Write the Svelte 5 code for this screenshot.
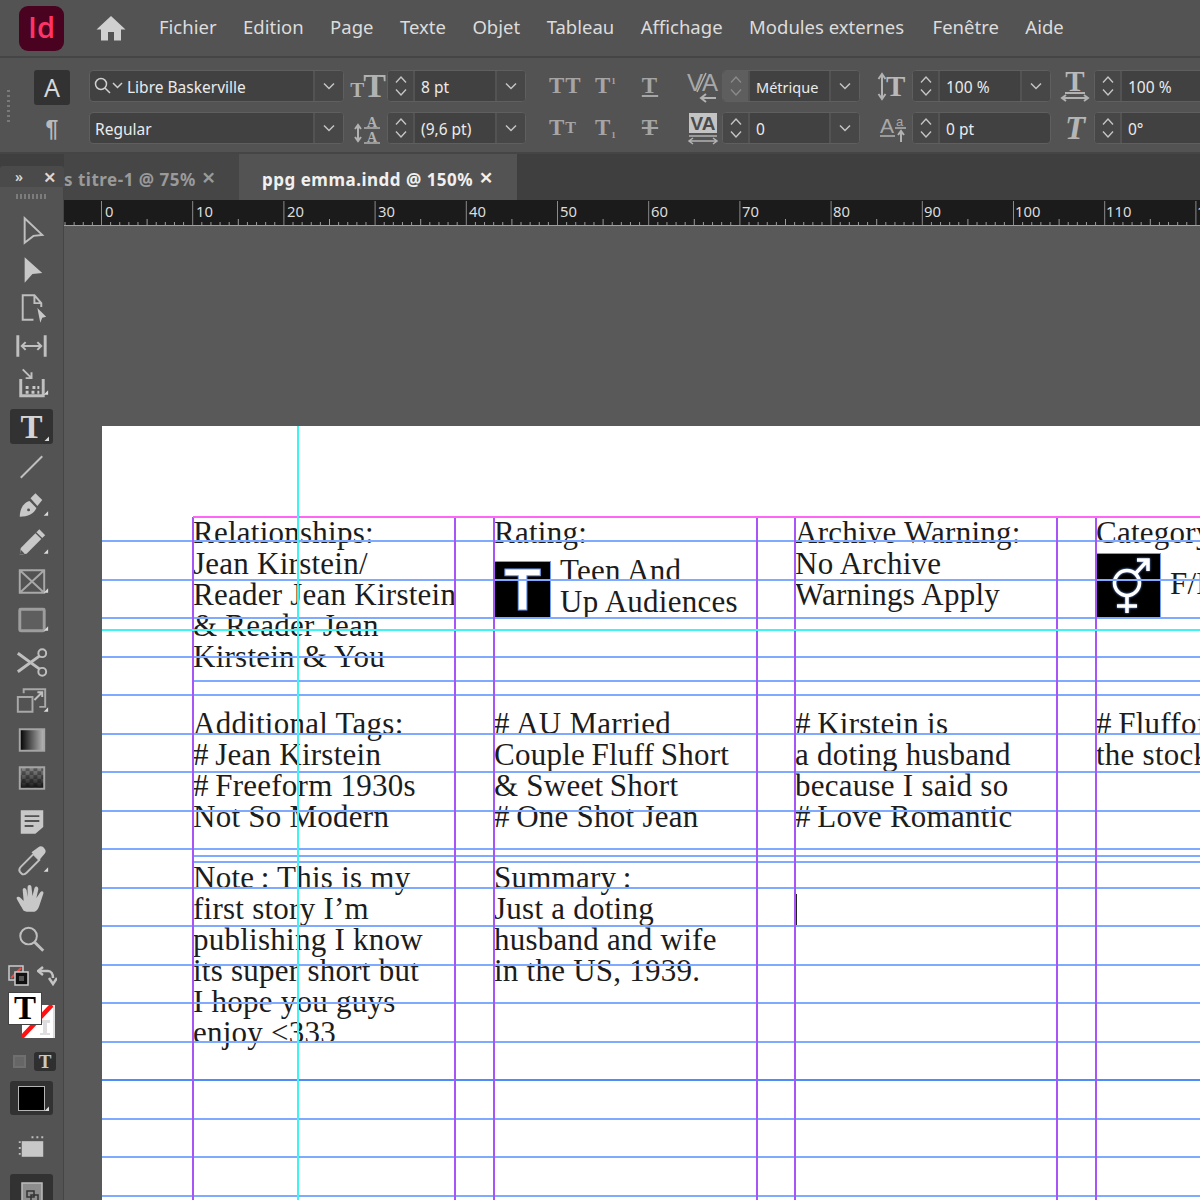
<script>
  const menus = ['Fichier','Edition','Page','Texte','Objet','Tableau','Affichage','Modules externes','Fenêtre','Aide'];
  const hGuides = [115,154,192,231,269,308,346,385,423,462,500,539,577,616,693,731,770];
  const colGuides = [255,430,436];
  const vGuides = [91,353,392,655,693,955,994];
  const ticks = [];
  for (let i = -4; i < 130; i++) ticks.push(i);
  const labels = [];
  for (let i = 0; i <= 120; i += 10) labels.push(i);
  const unit = 9.12;
</script>

{#snippet chev()}
  <svg class="chev" width="14" height="8" viewBox="0 0 14 8"><path d="M2 1.5 7 6.5 12 1.5" /></svg>
{/snippet}
{#snippet stepper(dim)}
  <div class="stepper" class:dim={dim}>
    <svg width="14" height="9" viewBox="0 0 14 9"><path d="M2 7.5 7 2 12 7.5" /></svg>
    <svg width="14" height="9" viewBox="0 0 14 9"><path d="M2 1.5 7 7 12 1.5" /></svg>
  </div>
{/snippet}
{#snippet numfield(value, dd, dim)}
  <div class="field">
    {@render stepper(dim)}
    <span class="val" class:tight={dim}>{value}</span>
    {#if dd}<span class="dd">{@render chev()}</span>{/if}
  </div>
{/snippet}
{#snippet corner()}
  <path class="corner" d="M39 30h-4.500l4.500-4.500z" />
{/snippet}

<div class="app">
  <header class="menubar">
    <div class="logo">Id</div>
    <svg class="home" width="30" height="26" viewBox="0 0 30 26"><path d="M15 1 29.500 14.500H25V25.500H18V17H12V25.500H5V14.500H.5z" /></svg>
    <nav class="menus">
      {#each menus as m}<span>{m}</span>{/each}
    </nav>
  </header>

  <section class="panel">
    <div class="grip"></div>
    <div class="col c-a">
      <div class="mode on">A</div>
      <div class="mode para">¶</div>
    </div>
    <div class="col c-font">
      <div class="field">
        <svg class="search" width="35" height="20" viewBox="0 0 35 20"><circle cx="9" cy="8" r="5.500"/><path d="M13 12 18 17M21 7l4.500 4.500L30 7"/></svg>
        <span class="val font">Libre Baskerville</span><span class="dd">{@render chev()}</span>
      </div>
      <div class="field">
        <span class="val style">Regular</span><span class="dd">{@render chev()}</span>
      </div>
    </div>
    <div class="col c-ico1">
      <div class="gl size"><small>T</small>T</div>
      <div class="gl lead"><svg width="32" height="32" viewBox="0 0 32 32"><text x="20" y="15" class="svgt">A</text><text x="20" y="30" class="svgt">A</text><path d="M6 14v14M3 17l3-4 3 4M3 25l3 4 3-4" class="s2"/><path d="M12 16H28M12 31H28" class="s1"/></svg></div>
    </div>
    <div class="col c-f1">
      {@render numfield('8 pt', true)}
      {@render numfield('(9,6 pt)', true)}
    </div>
    <div class="col c-t1"><div class="gl cap">TT</div><div class="gl cap"><span>T</span><small class="sc">T</small></div></div>
    <div class="col c-t2"><div class="gl cap">T<sup>1</sup></div><div class="gl cap">T<sub>1</sub></div></div>
    <div class="col c-t3"><div class="gl cap under">T</div><div class="gl cap strike">T</div></div>
    <div class="col c-ico2">
      <div class="gl"><svg width="32" height="32" viewBox="0 0 32 32"><text x="0" y="21" class="kern">V</text><text x="15" y="21" class="kern">A</text><path d="M10 22 19 3" class="s1"/><path d="M29 28H15M19 24l-5 4 5 4" class="s2"/></svg></div>
      <div class="gl"><svg width="32" height="32" viewBox="0 0 32 32"><rect x="2" y="1" width="28" height="20" fill="#c4c4c4"/><text x="16" y="18" text-anchor="middle" class="track">VA</text><path d="M2 24H30" class="s1"/><path d="M3 29H29M6 26l-4 3 4 3M26 26l4 3-4 3" class="s1"/></svg></div>
    </div>
    <div class="col c-f2">
      {@render numfield('Métrique', true, true)}
      {@render numfield('0', true)}
    </div>
    <div class="col c-ico3">
      <div class="gl"><svg width="32" height="32" viewBox="0 0 32 32"><text x="9" y="26" class="big">T</text><path d="M5 5V28M1.500 9 5 4l3.500 5M1.500 24 5 29l3.500-5" class="s2"/></svg></div>
      <div class="gl"><svg width="32" height="32" viewBox="0 0 32 32"><text x="3" y="21" class="mid">A</text><text x="19" y="14" class="tiny">a</text><path d="M3 24H18M18 16H29" class="s1"/><path d="M24 30V19M21 23l3-4 3 4" class="s2"/></svg></div>
    </div>
    <div class="col c-f3">
      {@render numfield('100 %', true)}
      {@render numfield('0 pt', false)}
    </div>
    <div class="col c-ico4">
      <div class="gl"><svg width="32" height="32" viewBox="0 0 32 32"><text x="16" y="21" text-anchor="middle" class="big">T</text><path d="M6 23H26" class="s2"/><path d="M3 28H29M7 25l-4 3 4 3M25 25l4 3-4 3" class="s2"/></svg></div>
      <div class="gl ital">T</div>
    </div>
    <div class="col c-f4">
      {@render numfield('100 %', false)}
      {@render numfield('0°', false)}
    </div>
  </section>

  <div class="workspace">
    <aside class="toolcol">
      <div class="tool-head"><span class="more">»</span><span class="x">×</span></div>
      <div class="tools">
        <div class="tgrip"></div>

        <div class="tool"><svg viewBox="0 0 44 38"><path d="M15 6 33 23 24 24 15 31z" class="o"/></svg></div>
        <div class="tool"><svg viewBox="0 0 44 38"><path d="M15 7 33 23 23 24 15 33z" class="f"/></svg></div>
        <div class="tool"><svg viewBox="0 0 44 38"><path d="M24 31H13V6H25L32 14V18M25 6V14H32" class="o"/><path d="M28 19 37 28 33 29 31 34z" class="f"/></svg></div>
        <div class="tool"><svg viewBox="0 0 44 38"><path d="M8 8V30M36 8V30" class="o w"/><path d="M12 19H32M16 15 12 19 16 23M28 15 32 19 28 23" class="o"/></svg></div>
        <div class="tool"><svg viewBox="0 0 44 38"><path d="M11 14V31H34V14" class="o w"/><path d="M13 4 22 13M22 7V13H16" class="o"/><path d="M16 21h3v3h-3zM23 21h3v3h-3zM16 26h3v3h-3zM22 26h3v3h-3zM28 21h2v3h-2zM28 26h2v3h-2z" class="f"/>{@render corner()}</svg></div>

        <div class="tool sel gap"><span class="tt">T</span><svg class="ov" viewBox="0 0 44 34">{@render corner()}</svg></div>

        <div class="tool"><svg viewBox="0 0 44 38"><path d="M11 30 33 8" class="o"/></svg></div>
        <div class="tool"><svg viewBox="0 0 44 38"><path d="M10 31C10 24 13 17 20 15L27 22C25 28 18 31 10 31Z" class="f"/><path d="M21 12 26 7 33 14 28 20z" class="f"/><circle cx="19" cy="24" r="1.500" fill="#535353"/>{@render corner()}</svg></div>
        <div class="tool"><svg viewBox="0 0 44 38"><path d="M10 31 11 24 26 9 32 15 17 30z" class="f"/><path d="M27 8 30 5 36 11 33 14z" class="f"/><path d="M10 31 11 26 15 30z" fill="#535353"/>{@render corner()}</svg></div>
        <div class="tool"><svg viewBox="0 0 44 38"><path d="M10 7H35V30H10zM10 7 35 30M35 7 10 30" class="o soft"/>{@render corner()}</svg></div>
        <div class="tool"><svg viewBox="0 0 44 38"><rect x="10" y="8" width="25" height="22" class="o w rectt" rx="1"/>{@render corner()}</svg></div>

        <div class="tool gap"><svg viewBox="0 0 44 38"><circle cx="33" cy="9" r="4" class="o"/><circle cx="33" cy="28" r="4" class="o"/><path d="M8 9 30 25M8 28 30 12" class="o w"/></svg></div>
        <div class="tool"><svg viewBox="0 0 44 38"><path d="M14 11V7H36V25H30" class="o soft"/><path d="M8 15H23V30H8z" class="o soft"/><path d="M25 18 33 10M28 10H33V15" class="o"/>{@render corner()}</svg></div>
        <div class="tool"><svg viewBox="0 0 44 38"><defs><linearGradient id="g"><stop offset="0" stop-color="#000"/><stop offset="1" stop-color="#bbb"/></linearGradient><pattern id="ch" width="8" height="8" patternUnits="userSpaceOnUse"><rect width="8" height="8" fill="#8b8b8b"/><rect width="4" height="4" fill="#5e5e5e"/><rect x="4" y="4" width="4" height="4" fill="#5e5e5e"/></pattern><linearGradient id="g2" x1="0" y1="1" x2="0" y2="0"><stop offset="0" stop-color="#000" stop-opacity=".85"/><stop offset="1" stop-color="#000" stop-opacity="0"/></linearGradient></defs><rect x="10" y="8" width="25" height="22" fill="url(#g)" stroke="#a5a5a5" stroke-width="2"/></svg></div>
        <div class="tool"><svg viewBox="0 0 44 38"><rect x="10" y="8" width="25" height="22" fill="url(#ch)"/><rect x="10" y="8" width="25" height="22" fill="url(#g2)" stroke="#a5a5a5" stroke-width="2"/></svg></div>

        <div class="tool gap2"><svg viewBox="0 0 44 38"><path d="M11 7H34V24L26 31H11z" class="f"/><path d="M15 13H30M15 18H30M15 23H24" stroke="#535353" stroke-width="2"/></svg></div>
        <div class="tool"><svg viewBox="0 0 44 38"><path d="M12 32 10 30C9 28 10 26 11 25L24 12 30 18 17 31C15 33 13 33 12 32Z" class="o"/><path d="M22 10 29 5C31 3 34 4 35 6 37 8 37 10 35 12L30 18z" class="f"/>{@render corner()}</svg></div>
        <div class="tool"><svg viewBox="0 0 44 38"><path d="M14 31C11 26 8 21 7 19 6 16 9 16 11 18L14 21 13 10C13 7 16 7 17 10L18 17 18 7C18 4 22 4 22 7L23 16 25 8C26 5 29 6 29 9L27 18 31 12C33 10 35 12 34 14L30 26C29 29 27 32 25 32H17Z" class="f"/></svg></div>
        <div class="tool zoomt"><svg viewBox="0 0 44 38"><circle cx="19" cy="16" r="8.500" class="o"/><path d="M25 22 34 31" class="o w"/></svg></div>

        <div class="swaprow">
          <svg width="22" height="22" viewBox="0 0 22 22"><rect x="1" y="1" width="14" height="14" fill="#555" stroke="#ccc" stroke-width="1.500"/><path d="M3 13 13 3" stroke="#f44" stroke-width="2"/><rect x="7" y="7" width="13" height="13" fill="#111" stroke="#ccc" stroke-width="1.500"/><rect x="11" y="11" width="5" height="5" fill="#555"/></svg>
          <svg width="20" height="20" viewBox="0 0 20 20"><path d="M2 5H11C14 5 16 8 16 12" class="sw"/><path d="M6 1 1 5 6 9M12 12 16 18 20 12" class="sw"/></svg>
        </div>

        <div class="swatches">
          <div class="stroke"><svg width="33" height="33" viewBox="0 0 33 33"><rect width="31" height="33" fill="#fff"/><path d="M18 15h10v3h-3v10h3v2H18v-2h3V18h-3z" fill="#ddd"/><path d="M-1 33 30 0" stroke="#f11" stroke-width="4.500"/><rect x="31" width="2" height="33" fill="#ddd"/></svg></div>
          <div class="fill">T</div>
        </div>

        <div class="applyrow">
          <span class="apply-box"></span>
          <span class="apply-t">T</span>
        </div>

        <div class="preview"><span class="blk"></span><svg class="ov" viewBox="0 0 44 34">{@render corner()}</svg></div>

        <div class="tool lastgap"><svg viewBox="0 0 44 38"><path d="M12 12H34V28H12z" class="f"/><path d="M23 7v3M28 7v3M33 7v3M9 13h3M9 19h3M9 25h3" class="d"/></svg></div>
        <div class="preview low"><svg width="28" height="30" viewBox="0 0 28 30"><rect x="4" y="4" width="20" height="24" fill="#8d8d8d" stroke="#bdbdbd" stroke-width="1.500"/><rect x="9" y="12" width="7" height="6" fill="none" stroke="#333" stroke-width="1.500"/><rect x="13" y="16" width="7" height="6" fill="none" stroke="#333" stroke-width="1.500"/></svg></div>
      </div>
    </aside>

    <main class="docarea">
      <div class="tabs">
        <div class="tab inactive"><span class="t-l">s titre-1 @ 75%</span><span class="t-x">×</span></div>
        <div class="tab active"><span class="t-l">ppg emma.indd @ 150%</span><span class="t-x">×</span></div>
      </div>
      <div class="ruler">
        <svg width="1136" height="26" viewBox="0 0 1136 26">
          {#each ticks as t}
            <path d={`M${37.500 + t * unit} 26V${t % 10 === 0 ? 1 : t % 5 === 0 ? 19 : 22}`} class={t % 10 === 0 ? 'rt big-t' : 'rt'} />
          {/each}
        </svg>
        <div class="rlabels">
          {#each labels as l}<span style={`left:${41 + l * 9.1}px`}>{l}</span>{/each}
        </div>
      </div>
      <div class="canvas">
        <div class="page">
          <div class="frame f1">Relationships:<br>Jean Kirstein/<br>Reader Jean Kirstein<br>&amp; Reader Jean<br>Kirstein &amp; You</div>
          <div class="frame f2">Additional Tags:<br>#&thinsp;Jean Kirstein<br>#&thinsp;Freeform 1930s<br>Not So Modern</div>
          <div class="frame f3">Note&thinsp;: This is my<br>first story I’m<br>publishing I know<br>its super short but<br>I hope you guys<br>enjoy &lt;333</div>

          <div class="frame f4">Rating:</div>
          <div class="badge b-t"><span>T</span></div>
          <div class="frame f5">Teen And<br>Up Audiences</div>
          <div class="frame f6">#&thinsp;AU Married<br>Couple&thinsp;Fluff&thinsp;Short<br>&amp; Sweet&thinsp;Short<br>#&thinsp;One Shot Jean</div>
          <div class="frame f7">Summary&thinsp;:<br>Just a doting<br>husband and wife<br>in the US, 1939.</div>

          <div class="frame f8">Archive Warning:<br>No Archive<br>Warnings Apply</div>
          <div class="frame f9">#&thinsp;Kirstein is<br>a doting husband<br>because I said so<br>#&thinsp;Love Romantic</div>
          <div class="caret"></div>

          <div class="frame f10">Category:</div>
          <div class="badge b-g">
            <svg width="65" height="65" viewBox="0 0 65 65"><circle cx="31" cy="30" r="12.500" class="gs"/><path d="M31 43V60M21 53H41M40 20 52 7M41 7H52V18" class="gs"/></svg>
          </div>
          <div class="frame f11">F/M</div>
          <div class="frame f12">#&thinsp;Fluffof<br>the stock</div>

          {#each hGuides as y}<div class="gh" style={`top:${y - 1}px`}></div>{/each}
          {#each colGuides as y}<div class="gh col-g" style={`top:${y - 1}px`}></div>{/each}
          <div class="gh strong"></div>
          {#each vGuides as x}<div class="gv" style={`left:${x - 1}px`}></div>{/each}
          <div class="margin-top"></div>
          <div class="cyan-h"></div>
          <div class="cyan-v"></div>
        </div>
      </div>
    </main>
  </div>
</div>

<style>
  :global(body) { margin: 0; background: #595959; overflow: hidden; }
  .app { width: 1200px; height: 1200px; overflow: hidden; display: flex; flex-direction: column; font-family: "Noto Sans", "Open Sans", sans-serif; color: #e6e6e6; }

  .menubar { height: 58px; flex: none; background: #535353; display: flex; align-items: center; box-sizing: border-box; border-bottom: 2px solid #454545; }
  .logo { margin-left: 19px; width: 45px; height: 45px; border-radius: 9px; background: #49021f; color: #ff3366; font: 600 29px/41px "Open Sans", sans-serif; text-align: center; }
  .home { margin-left: 32px; fill: #d0d0d0; }
  .menus { margin-left: 33px; margin-bottom: 3px; display: flex; gap: 26.500px; font-size: 18.500px; color: #dcdcdc; }
  .menus span:nth-child(8) { margin-right: 2px; }

  .panel { height: 96px; flex: none; box-sizing: border-box; background: #535353; border-bottom: 2px solid #454545; display: flex; position: relative; padding-top: 12px; align-items: flex-start; }
  .grip { position: absolute; left: 7px; top: 32px; width: 3px; height: 32px; background: repeating-linear-gradient(#7a7a7a 0 2px, transparent 2px 5px); }
  .col { display: flex; flex-direction: column; gap: 10px; flex: none; }
  .col > * { height: 32px; }
  .c-a { margin-left: 34px; width: 36px; }
  .mode { background: #323232; border-radius: 3px; font-size: 25px; line-height: 35px; text-align: center; color: #d8d8d8; height: 35px !important; margin-bottom: -3px; }
  .mode.para { background: none; color: #b9b9b9; font: bold 23px/34px "Liberation Sans", sans-serif; }
  .c-font { margin-left: 19px; width: 255px; }
  .c-ico1 { margin-left: 8px; width: 32px; }
  .c-f1 { margin-left: 3px; width: 139px; }
  .c-t1 { margin-left: 23px; width: 32px; }
  .c-t2 { margin-left: 14px; width: 28px; }
  .c-t3 { margin-left: 14px; width: 26px; }
  .c-ico2 { margin-left: 22px; width: 36px; }
  .c-f2 { margin-left: 1px; width: 138px; }
  .c-ico3 { margin-left: 16px; width: 34px; }
  .c-f3 { margin-left: 2px; width: 139px; }
  .c-ico4 { margin-left: 7px; width: 34px; }
  .c-f4 { margin-left: 2px; width: 140px; }

  .field { box-sizing: border-box; display: flex; align-items: stretch; background: #414141; border: 1px solid #5f5f5f; border-radius: 4px; overflow: hidden; }
  .val { flex: 1; min-width: 0; font-size: 15.500px; line-height: 32px; padding-left: 6px; color: #ebebeb; white-space: nowrap; }
  .val.tight { font-size: 14.500px; }
  .val.font { padding-left: 0; }
  .val.style { padding-left: 5px; }
  .search { margin: 5px 0 0 2px; flex: none; fill: none; stroke: #cfcfcf; stroke-width: 1.500; }
  .dd { width: 28px; flex: none; border-left: 2px solid #535353; background: #474747; display: flex; align-items: center; justify-content: center; }
  .chev { fill: none; stroke: #c4c4c4; stroke-width: 1.500; }
  .stepper { width: 25px; flex: none; background: #474747; border-right: 2px solid #535353; display: flex; flex-direction: column; align-items: center; justify-content: center; gap: 4px; }
  .stepper svg { fill: none; stroke: #c4c4c4; stroke-width: 1.400; }
  .stepper.dim { background: #5e5e5e; }
  .stepper.dim svg { stroke: #8a8a8a; }

  .gl { color: #b2b2b2; font-family: "Liberation Serif", serif; font-weight: bold; line-height: 32px; display: flex; align-items: center; justify-content: center; }
  .gl svg { display: block; overflow: visible; }
  .size { font-size: 34px; align-items: baseline; }
  .size small { font-size: 21px; margin-right: -1px; }
  .cap { font-size: 23px; letter-spacing: 1px; justify-content: flex-start; color: #a5a5a5; }
  .cap small.sc { font-size: 16px; }
  .cap sup { font-size: 9px; align-self: flex-start; margin-top: 6px; line-height: 10px; }
  .cap sub { font-size: 9px; align-self: flex-end; margin-bottom: 4px; line-height: 10px; }
  .under { text-decoration: underline; text-decoration-thickness: 2px; text-underline-offset: 2px; justify-content: center; }
  .strike { text-decoration: line-through; text-decoration-thickness: 2px; justify-content: center; }
  .ital { font-style: italic; font-size: 33px; color: #b5b5b5; }
  .svgt { font: bold 14px "Liberation Serif", serif; fill: #b2b2b2; text-anchor: middle; }
  .kern { font: 24px "Liberation Sans", sans-serif; fill: #a8a8a8; }
  .track { font: bold 19px "Liberation Sans", sans-serif; fill: #4a4a4a; }
  .big { font: bold 29px "Liberation Serif", serif; fill: #b9b9b9; }
  .mid { font: 21px "Liberation Sans", sans-serif; fill: #a8a8a8; }
  .tiny { font: 13px "Liberation Sans", sans-serif; fill: #a8a8a8; }
  .s1 { stroke: #b2b2b2; stroke-width: 1.500; fill: none; }
  .s2 { stroke: #b2b2b2; stroke-width: 2; fill: none; }

  .workspace { flex: 1; min-height: 0; display: flex; }
  .toolcol { width: 64px; flex: none; background: #3f3f3f; display: flex; flex-direction: column; padding-top: 12px; position: relative; z-index: 1; }
  .tool-head { height: 21px; flex: none; background: #4a4a4a; border-radius: 3px 3px 0 0; display: flex; justify-content: space-between; padding: 0 8px 0 15px; font-weight: 600; color: #d8d8d8; line-height: 21px; }
  .more { font-size: 14px; }
  .x { font-size: 22px; }
  .tools { flex: 1; background: #535353; border-right: 1px solid #454545; display: flex; flex-direction: column; align-items: stretch; min-height: 0; }
  .tgrip { height: 5px; margin: 7px 16px 13px; flex: none; background: repeating-linear-gradient(90deg, #7c7c7c 0 2px, transparent 2px 4px); }
  .tool { height: 38.300px; flex: none; margin: 0 10px; position: relative; display: flex; align-items: center; justify-content: center; }
  .tool svg { width: 44px; height: 38px; display: block; }
  .tool.gap { margin-top: 5px; }
  .tool.gap2 { margin-top: 6px; }
  .tool.zoomt { margin-top: 2px; }
  .tool .o { fill: none; stroke: #bfbfbf; stroke-width: 2; }
  .tool .o.soft { stroke: #a8a8a8; }
  .tool .f { fill: #c8c8c8; }
  .tool .o.w { stroke-width: 3; }
  .tool .o.rectt { stroke: #9d9d9d; fill: #5e5e5e; }
  .tool .d { fill: none; stroke: #bdbdbd; stroke-width: 2; stroke-dasharray: 2 1; }
  .corner { fill: #d9d9d9; }
  .tool.sel { background: #323232; border-radius: 3px; height: 35px; margin-bottom: 3px; margin-top: 6px; }
  .tt { font: bold 33px/34px "Liberation Serif", serif; color: #d4d4d4; }
  .ov { position: absolute; left: 0; top: 0; width: 44px; height: 34px; }

  .swaprow { height: 24px; margin: 6px 6px 0 8px; flex: none; display: flex; justify-content: space-between; align-items: center; }
  .sw { fill: none; stroke: #c4c4c4; stroke-width: 2.500; }
  .swatches { position: relative; height: 48px; margin-top: 4px; flex: none; }
  .stroke { position: absolute; left: 22px; top: 13px; line-height: 0; }
  .fill { position: absolute; left: 8px; top: 0; width: 32px; height: 31px; background: #fff; border: 1px solid #444; color: #000; font: bold 33px/31px "Liberation Serif", serif; text-align: center; }
  .applyrow { height: 22px; margin-top: 10px; flex: none; display: flex; justify-content: space-between; padding: 0 7px 0 13px; align-items: center; }
  .apply-box { width: 13px; height: 13px; background: #666; border: 2px solid #6f6f6f; box-sizing: border-box; }
  .apply-t { width: 22px; height: 19px; background: #2f2f2f; border-radius: 3px; color: #c8c8c8; font: bold 19px/19px "Liberation Serif", serif; text-align: center; }
  .preview { height: 34px; margin: 9px 10px 0; flex: none; background: #323232; border-radius: 3px; position: relative; display: flex; align-items: center; justify-content: center; }
  .preview.low { margin-top: 6px; height: 40px; }
  .blk { width: 25px; height: 23px; background: #000; border: 1px solid #b5b5b5; }
  .tool.lastgap { margin-top: 14px; }

  .docarea { flex: 1; min-width: 0; display: flex; flex-direction: column; background: #595959; }
  .tabs { height: 46px; flex: none; background: #3f3f3f; display: flex; align-items: stretch; }
  .tab { display: flex; align-items: center; font-weight: 700; font-size: 17px; letter-spacing: .5px; padding-top: 5px; box-sizing: border-box; }
  .inactive { width: 175px; background: #464646; color: #9a9a9a; }
  .active { width: 278px; background: #535353; color: #f0f0f0; }
  .active .t-l { margin-left: 23px; }
  .t-x { font-size: 24px; line-height: 16px; margin-left: 6px; margin-top: -6px; font-weight: 600; }
  .ruler { height: 26px; flex: none; background: #1b1b1b; position: relative; overflow: hidden; border-bottom: 1px solid #a0a0a0; box-sizing: border-box; }
  .ruler svg { display: block; position: absolute; left: 0; top: 0; }
  .rt { stroke: #9a9a9a; stroke-width: 1; fill: none; }
  .big-t { stroke: #8a8a8a; }
  .rlabels span { position: absolute; top: 2px; font-size: 14.800px; line-height: 18px; color: #dcdcdc; }

  .canvas { flex: 1; min-height: 0; padding: 200px 0 0 38px; box-sizing: border-box; overflow: hidden; }
  .page { height: 100%; background: #fff; position: relative; overflow: hidden; }
  .frame { position: absolute; white-space: nowrap; font-family: "Liberation Serif", serif; font-size: 31px; letter-spacing: .25px; line-height: 30.900px; color: #1c1c1c; }
  .f1 { left: 91px; top: 92px; }
  .f2 { left: 91px; top: 283px; }
  .f3 { left: 91px; top: 437px; }
  .f4 { left: 392px; top: 92px; }
  .f5 { left: 458px; top: 130px; }
  .f6 { left: 392px; top: 283px; }
  .f7 { left: 392px; top: 437px; }
  .f8 { left: 693px; top: 92px; }
  .f9 { left: 693px; top: 283px; }
  .f10 { left: 994px; top: 92px; }
  .f11 { left: 1068px; top: 143px; }
  .f12 { left: 994px; top: 283px; }
  .caret { position: absolute; left: 693px; top: 468px; width: 2px; height: 31px; background: #222; }
  .badge { position: absolute; background: #000; }
  .b-t { left: 392px; top: 135px; width: 57px; height: 57px; color: #fff; font: bold 60px/57px "Liberation Sans", sans-serif; text-align: center; box-shadow: inset 0 0 0 1px #6d9cf4; -webkit-text-stroke: 1px #6d9cf4; }
  .b-g { left: 994px; top: 127px; width: 65px; height: 65px; box-shadow: inset 0 0 0 1px #6d9cf4; line-height: 0; }
  .b-g svg { filter: drop-shadow(0 0 1px #6d9cf4); }
  .gs { fill: none; stroke: #fff; stroke-width: 3.500; }
  .gh { position: absolute; left: 0; right: 0; height: 2px; background: #80aaff; }
  .gh.col-g { left: 91px; }
  .gh.strong { top: 653px; background: #4f8df5; }
  .gv { position: absolute; top: 91px; bottom: 0; width: 2px; background: #a855f7; }
  .margin-top { position: absolute; left: 91px; right: 0; top: 90px; height: 2px; background: #ff66f5; }
  .cyan-h { position: absolute; left: 0; right: 0; top: 203px; height: 2px; background: #3ff3f3; }
  .cyan-v { position: absolute; left: 195px; top: 0; bottom: 0; width: 2px; background: #3ff3f3; }
</style>
